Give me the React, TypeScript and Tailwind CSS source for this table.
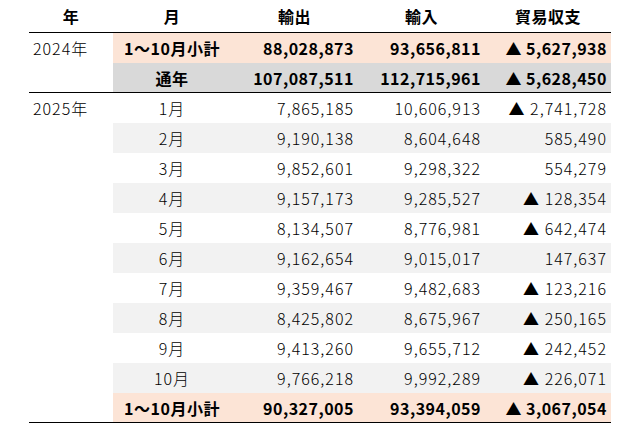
const cols = "grid grid-cols-[84px_118px_127px_127px_126px]";

type Row = {
  year?: string;
  month: string;
  ex: string;
  im: string;
  bal: string;
  bg: string;
  bold?: boolean;
  line?: boolean;
};

const rows: Row[] = [
  { year: "2024年", month: "1〜10月小計", ex: "88,028,873", im: "93,656,811", bal: "▲ 5,627,938", bg: "bg-[#fce4d6]", bold: true },
  { month: "通年", ex: "107,087,511", im: "112,715,961", bal: "▲ 5,628,450", bg: "bg-[#d9d9d9]", bold: true, line: true },
  { year: "2025年", month: "1月", ex: "7,865,185", im: "10,606,913", bal: "▲ 2,741,728", bg: "bg-white" },
  { month: "2月", ex: "9,190,138", im: "8,604,648", bal: "585,490", bg: "bg-[#f2f2f2]" },
  { month: "3月", ex: "9,852,601", im: "9,298,322", bal: "554,279", bg: "bg-white" },
  { month: "4月", ex: "9,157,173", im: "9,285,527", bal: "▲ 128,354", bg: "bg-[#f2f2f2]" },
  { month: "5月", ex: "8,134,507", im: "8,776,981", bal: "▲ 642,474", bg: "bg-white" },
  { month: "6月", ex: "9,162,654", im: "9,015,017", bal: "147,637", bg: "bg-[#f2f2f2]" },
  { month: "7月", ex: "9,359,467", im: "9,482,683", bal: "▲ 123,216", bg: "bg-white" },
  { month: "8月", ex: "8,425,802", im: "8,675,967", bal: "▲ 250,165", bg: "bg-[#f2f2f2]" },
  { month: "9月", ex: "9,413,260", im: "9,655,712", bal: "▲ 242,452", bg: "bg-white" },
  { month: "10月", ex: "9,766,218", im: "9,992,289", bal: "▲ 226,071", bg: "bg-[#f2f2f2]" },
  { month: "1〜10月小計", ex: "90,327,005", im: "93,394,059", bal: "▲ 3,067,054", bg: "bg-[#fce4d6]", bold: true, line: true },
];

export default function App() {
  return (
    <div className="w-[622px] h-[432px] bg-white font-['Noto_Sans_CJK_JP',sans-serif] text-[16px] text-black">
      <div className="ml-[29px] w-[582px]">
        <div className={`${cols} h-[33px] items-center border-b border-black font-bold tracking-[0.5px]`}>
          <div className="text-center">年</div>
          <div className="text-center">月</div>
          <div className="text-center">輸出</div>
          <div className="text-center">輸入</div>
          <div className="text-center">貿易収支</div>
        </div>
        {rows.map((r, i) => (
          <div key={i} className={`${cols} h-[30px] ${r.line ? "border-b border-black" : ""}`}>
            <div className="flex items-center pl-[4px] bg-white font-light tracking-[1px]">{r.year ?? ""}</div>
            <div
              className={`col-span-4 grid grid-cols-[118px_127px_127px_126px] items-center ${r.bg} ${
                r.bold ? "font-bold tracking-[0.5px]" : "font-light tracking-[1px]"
              }`}
            >
              <div className="text-center">{r.month}</div>
              <div className="text-right pr-[4px]">{r.ex}</div>
              <div className="text-right pr-[4px]">{r.im}</div>
              <div className="text-right pr-[4px]">{r.bal}</div>
            </div>
          </div>
        ))}
      </div>
    </div>
  );
}
